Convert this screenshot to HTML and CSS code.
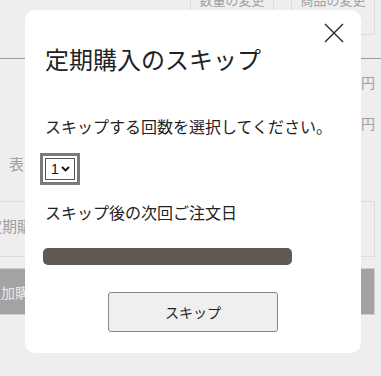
FILE: index.html
```html
<!doctype html>
<html lang="ja">
  <head>
    <meta charset="UTF-8" />
    <meta name="viewport" content="width=device-width, initial-scale=1.0" />
    <title>定期購入のスキップ</title>
    <link rel="stylesheet" href="styles.css">
  </head>
  <body>
    <div class="page">
      <div class="actions">
        <span class="sub-btn">数量の変更</span>
        <span class="sub-btn">商品の変更</span>
      </div>
      <div class="rule"></div>
      <div class="price">円</div>
      <div class="price second">円</div>
      <div class="row-label">表</div>
      <div class="term-box">定期購</div>
      <div class="add-btn">追加購入</div>
    </div>

    <div class="modal">
      <button class="close" aria-label="閉じる">
        <svg width="20" height="20" viewBox="0 0 20 20">
          <path d="M1 1 L19 19 M19 1 L1 19" stroke="#222" stroke-width="1.3" fill="none" />
        </svg>
      </button>
      <h2 class="modal-title">定期購入のスキップ</h2>
      <p class="modal-text">スキップする回数を選択してください。</p>
      <div class="select-wrap">
        <select class="count">
          <option>1</option>
          <option>2</option>
          <option>3</option>
        </select>
        <svg class="chevron" width="9" height="6" viewBox="0 0 9 6">
          <path d="M1 1 L4.5 4.5 L8 1" stroke="#111" stroke-width="1.8" fill="none" />
        </svg>
      </div>
      <p class="modal-text next-label">スキップ後の次回ご注文日</p>
      <div class="date-bar"></div>
      <div class="modal-foot">
        <button class="skip-btn">スキップ</button>
      </div>
    </div>
  </body>
</html>
```

FILE: styles.css
```css
body {
  margin: 0;
  background: #eeeeee;
  font-family: "Noto Sans CJK JP", "Noto Sans", sans-serif;
  color: #222;
  overflow: hidden;
}
.page {
  width: 375px;
  color: #a0a0a0;
}
.actions {
  display: flex;
  justify-content: flex-end;
  gap: 17px;
  margin-top: -12px;
}
.sub-btn {
  box-sizing: border-box;
  width: 84px;
  height: 47px;
  padding-top: 4px;
  border: 1px solid #dcdcdc;
  font-size: 13px;
  line-height: 13px;
  text-align: center;
}
.rule {
  width: 381px;
  height: 1px;
  background: #999;
  margin-top: 23px;
}
.price {
  font-size: 14px;
  line-height: 20px;
  text-align: right;
  margin-top: 13px;
}
.price.second {
  margin-top: 21px;
}
.row-label {
  font-size: 15px;
  line-height: 20px;
  padding-left: 9px;
  margin-top: 21px;
}
.term-box {
  box-sizing: border-box;
  height: 56px;
  margin-top: 27px;
  margin-left: -20px;
  padding: 14px 0 0 6px;
  border: 1px solid #dcdcdc;
  font-size: 15px;
  line-height: 20px;
}
.add-btn {
  box-sizing: border-box;
  height: 47px;
  margin-top: 11px;
  margin-left: -20px;
  padding: 13px 0 0 6px;
  background: #a3a3a3;
  border: 1px solid #cfcfcf;
  color: #eaeaea;
  font-size: 14px;
  line-height: 20px;
}
.modal {
  position: fixed;
  left: 25px;
  top: 10px;
  box-sizing: border-box;
  width: 336px;
  height: 343px;
  padding: 32px 20px 20px;
  background: #fff;
  border-radius: 10px;
}
.close {
  position: absolute;
  right: 17px;
  top: 13px;
  padding: 0;
  border: none;
  background: none;
  width: 20px;
  height: 20px;
}
.modal-title {
  margin: 0;
  font-size: 24px;
  line-height: 34px;
  font-weight: normal;
  color: #222;
}
.modal-text {
  margin: 38px 0 0;
  font-size: 16px;
  line-height: 24px;
}
.select-wrap {
  position: relative;
  display: inline-block;
  margin-top: 20px;
  vertical-align: top;
}
.count {
  appearance: none;
  -webkit-appearance: none;
  box-sizing: border-box;
  width: 30px;
  height: 22px;
  padding: 0 0 0 5px;
  border: 1px solid #555;
  border-radius: 0;
  background: #fff;
  font-family: "Liberation Sans", Arial, sans-serif;
  font-size: 14px;
  color: #111;
  outline: 3px solid #7a7a7a;
  outline-offset: 2px;
  display: block;
}
.chevron {
  position: absolute;
  right: 5px;
  top: 8px;
  pointer-events: none;
}
.next-label {
  margin-top: 20px;
}
.date-bar {
  width: 249px;
  height: 17px;
  margin: 24px 0 0 -2px;
  background: #5e5955;
  border-radius: 5px;
}
.modal-foot {
  display: flex;
  justify-content: center;
  margin-top: 27px;
}
.skip-btn {
  width: 170px;
  height: 40px;
  background: #efefef;
  border: 1px solid #888;
  border-radius: 3px;
  font-family: "Noto Sans CJK JP", sans-serif;
  font-size: 14px;
  color: #222;
}
```
